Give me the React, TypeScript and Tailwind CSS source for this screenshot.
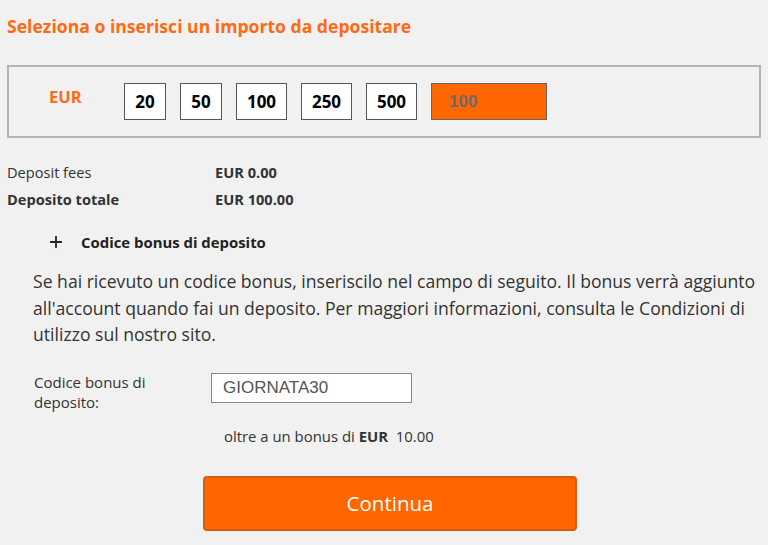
import { Plus } from "lucide-react"

const AMOUNTS = ["20", "50", "100", "250", "500"]

export default function App() {
  return (
    <div className="min-h-[545px] w-[768px] bg-[#f1f1f1] font-['Open_Sans',sans-serif] text-[#333]">
      <div className="px-[7px] pt-[14px]">
        <h2 className="text-[17.6px] font-bold leading-[24px] text-[#ff6a13]">
          Seleziona o inserisci un importo da depositare
        </h2>

        {/* amount picker */}
        <div className="mt-[27px] flex h-[73px] items-center border-2 border-[#b5b5b5] pl-[40px]">
          <span className="mb-[8px] w-[75px] text-[16.5px] font-bold text-[#ff6a13]">EUR</span>
          <div className="flex gap-[14px]">
            {AMOUNTS.map((a) => (
              <button
                key={a}
                className={`h-[37px] border border-[#555] bg-white text-[17px] font-bold text-black ${
                  a.length > 2 ? "w-[51px]" : "w-[42px]"
                }`}
              >
                {a}
              </button>
            ))}
          </div>
          <div className="ml-[14px] flex h-[37px] w-[116px] items-center border border-[#666] bg-[#ff6600] pl-[17px] font-['Liberation_Sans',sans-serif] text-[17px] font-bold text-[#6b6b6b]">
            100
          </div>
        </div>

        {/* totals */}
        <div className="mt-[24px] grid grid-cols-[208px_1fr] gap-y-[6px] text-[14.6px] leading-[21px]">
          <span>Deposit fees</span>
          <span className="font-bold">EUR 0.00</span>
          <span className="font-bold">Deposito totale</span>
          <span className="font-bold">EUR 100.00</span>
        </div>

        <div className="mt-[21px] flex items-center pl-[40px]">
          <Plus className="size-[18px] text-[#222]" strokeWidth={2.4} />
          <span className="ml-[16px] text-[14.9px] font-bold text-[#222]">Codice bonus di deposito</span>
        </div>
      </div>

      <p className="mt-[15px] pl-[33px] text-[17.6px] leading-[26.5px]">
        Se hai ricevuto un codice bonus, inseriscilo nel campo di seguito. Il bonus verrà aggiunto all'account quando
        fai un deposito. Per maggiori informazioni, consulta le Condizioni di utilizzo sul nostro sito.
      </p>

      <div className="mt-[24px] flex pl-[34px]">
        <label className="w-[177px] text-[15px] leading-[20px]">
          Codice bonus di
          <br />
          deposito:
        </label>
        <div className="mt-[1px] flex h-[30px] w-[201px] items-center border border-[#888] bg-white pl-[11px] font-['Liberation_Sans',sans-serif] text-[17px] text-[#555]">
          GIORNATA30
        </div>
      </div>

      <p className="mt-[14px] pl-[224px] text-[14.9px] leading-[20px]">
        oltre a un bonus di <span className="font-bold">EUR</span>&nbsp; 10.00
      </p>

      <div className="mt-[30px] pl-[203px]">
        <button className="h-[55px] w-[374px] rounded-[4px] border-2 border-[#d95b0b] bg-[#ff6600] text-[20.5px] text-white">
          Continua
        </button>
      </div>
    </div>
  )
}
